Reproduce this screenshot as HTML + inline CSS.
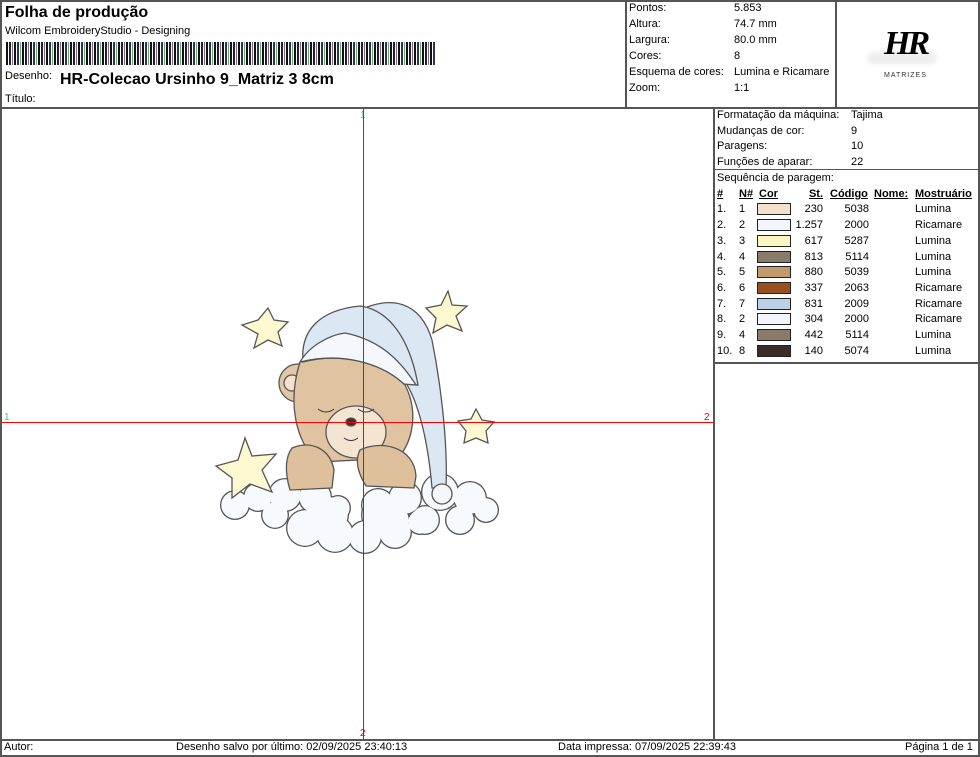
<!DOCTYPE html>
<html><head><meta charset="utf-8"><style>
*{margin:0;padding:0;box-sizing:border-box}
body{width:980px;height:757px;background:#fff;position:relative;overflow:hidden;font-family:"Liberation Sans",Arial,sans-serif;color:#000;font-size:11px}
.a{position:absolute;white-space:nowrap;line-height:13px}
.l{position:absolute;background:#555}
.sw{position:absolute;width:34px;height:12px;border:1px solid #222}
.r{text-align:right}
u{text-decoration:underline}
</style></head><body>
<div class="l" style="left:0;top:0;width:980px;height:2px"></div>
<div class="l" style="left:0;top:0;width:2px;height:757px"></div>
<div class="l" style="left:978px;top:0;width:2px;height:757px"></div>
<div class="l" style="left:0;top:107px;width:980px;height:2px"></div>
<div class="l" style="left:625px;top:0;width:2px;height:108px"></div>
<div class="l" style="left:835px;top:0;width:2px;height:108px"></div>
<div class="l" style="left:713px;top:108px;width:2px;height:632px"></div>
<div class="l" style="left:714px;top:169px;width:265px;height:1px"></div>
<div class="l" style="left:714px;top:362px;width:265px;height:2px"></div>
<div class="l" style="left:0;top:739px;width:980px;height:2px"></div>
<div class="l" style="left:0;top:755px;width:980px;height:2px"></div>

<div class="a" style="left:5px;top:4px;font-size:16px;font-weight:bold;line-height:18px">Folha de produção</div>
<div class="a" style="left:5px;top:25px">Wilcom EmbroideryStudio - Designing</div>
<div style="position:absolute;left:6px;top:42px;width:429px;height:23px;background:
repeating-linear-gradient(90deg,#111 0 2px,transparent 2px 3px,#223 3px 5px,transparent 5px 6px,#7a6a8a 6px 7px,transparent 7px 8px,#111 8px 10px,transparent 10px 11px,#335 11px 13px,transparent 13px 14px,#6a7 14px 15px,transparent 15px 16px)"></div>
<div class="a" style="left:5px;top:70px">Desenho:</div>
<div class="a" style="left:60px;top:71px;font-size:16px;font-weight:bold;line-height:18px">HR-Colecao Ursinho 9_Matriz 3 8cm</div>
<div class="a" style="left:5px;top:93px">Título:</div>

<div class="a" style="left:629px;top:2px">Pontos:</div><div class="a" style="left:734px;top:2px">5.853</div>
<div class="a" style="left:629px;top:18px">Altura:</div><div class="a" style="left:734px;top:18px">74.7 mm</div>
<div class="a" style="left:629px;top:34px">Largura:</div><div class="a" style="left:734px;top:34px">80.0 mm</div>
<div class="a" style="left:629px;top:50px">Cores:</div><div class="a" style="left:734px;top:50px">8</div>
<div class="a" style="left:629px;top:66px">Esquema de cores:</div><div class="a" style="left:734px;top:66px">Lumina e Ricamare</div>
<div class="a" style="left:629px;top:82px">Zoom:</div><div class="a" style="left:734px;top:82px">1:1</div>

<div style="position:absolute;left:867px;top:52px;width:70px;height:12px;border-radius:8px;background:#eee;filter:blur(2px)"></div>
<div class="a" style="left:884px;top:26px;font-family:'Liberation Serif',serif;font-style:italic;font-weight:bold;font-size:34px;line-height:36px;letter-spacing:-3px">HR</div>
<div class="a" style="left:884px;top:72px;font-size:7px;line-height:8px;letter-spacing:1px;color:#333">MATRIZES</div>

<div class="a" style="left:717px;top:109px">Formatação da máquina:</div><div class="a" style="left:851px;top:109px">Tajima</div>
<div class="a" style="left:717px;top:125px">Mudanças de cor:</div><div class="a" style="left:851px;top:125px">9</div>
<div class="a" style="left:717px;top:140px">Paragens:</div><div class="a" style="left:851px;top:140px">10</div>
<div class="a" style="left:717px;top:156px">Funções de aparar:</div><div class="a" style="left:851px;top:156px">22</div>
<div class="a" style="left:717px;top:172px">Sequência de paragem:</div>
<div class="a" style="left:717px;top:188px;font-weight:bold"><u>#</u></div>
<div class="a" style="left:739px;top:188px;font-weight:bold"><u>N#</u></div>
<div class="a" style="left:759px;top:188px;font-weight:bold"><u>Cor</u></div>
<div class="a r" style="left:790px;width:33px;top:188px;font-weight:bold"><u>St.</u></div>
<div class="a" style="left:830px;top:188px;font-weight:bold"><u>Código</u></div>
<div class="a" style="left:874px;top:188px;font-weight:bold"><u>Nome:</u></div>
<div class="a" style="left:915px;top:188px;font-weight:bold"><u>Mostruário</u></div>

<div class="a" style="left:717px;top:203px">1.</div><div class="a" style="left:739px;top:203px">1</div><div class="sw" style="left:757px;top:203px;background:#f2e0cc"></div><div class="a r" style="left:790px;width:33px;top:203px">230</div><div class="a r" style="left:830px;width:39px;top:203px">5038</div><div class="a" style="left:915px;top:203px">Lumina</div>
<div class="a" style="left:717px;top:219px">2.</div><div class="a" style="left:739px;top:219px">2</div><div class="sw" style="left:757px;top:219px;background:#f2f6fc"></div><div class="a r" style="left:790px;width:33px;top:219px">1.257</div><div class="a r" style="left:830px;width:39px;top:219px">2000</div><div class="a" style="left:915px;top:219px">Ricamare</div>
<div class="a" style="left:717px;top:235px">3.</div><div class="a" style="left:739px;top:235px">3</div><div class="sw" style="left:757px;top:235px;background:#fdf6c0"></div><div class="a r" style="left:790px;width:33px;top:235px">617</div><div class="a r" style="left:830px;width:39px;top:235px">5287</div><div class="a" style="left:915px;top:235px">Lumina</div>
<div class="a" style="left:717px;top:251px">4.</div><div class="a" style="left:739px;top:251px">4</div><div class="sw" style="left:757px;top:251px;background:#8a7a6a"></div><div class="a r" style="left:790px;width:33px;top:251px">813</div><div class="a r" style="left:830px;width:39px;top:251px">5114</div><div class="a" style="left:915px;top:251px">Lumina</div>
<div class="a" style="left:717px;top:266px">5.</div><div class="a" style="left:739px;top:266px">5</div><div class="sw" style="left:757px;top:266px;background:#c09a6c"></div><div class="a r" style="left:790px;width:33px;top:266px">880</div><div class="a r" style="left:830px;width:39px;top:266px">5039</div><div class="a" style="left:915px;top:266px">Lumina</div>
<div class="a" style="left:717px;top:282px">6.</div><div class="a" style="left:739px;top:282px">6</div><div class="sw" style="left:757px;top:282px;background:#98501e"></div><div class="a r" style="left:790px;width:33px;top:282px">337</div><div class="a r" style="left:830px;width:39px;top:282px">2063</div><div class="a" style="left:915px;top:282px">Ricamare</div>
<div class="a" style="left:717px;top:298px">7.</div><div class="a" style="left:739px;top:298px">7</div><div class="sw" style="left:757px;top:298px;background:#bcd0e8"></div><div class="a r" style="left:790px;width:33px;top:298px">831</div><div class="a r" style="left:830px;width:39px;top:298px">2009</div><div class="a" style="left:915px;top:298px">Ricamare</div>
<div class="a" style="left:717px;top:313px">8.</div><div class="a" style="left:739px;top:313px">2</div><div class="sw" style="left:757px;top:313px;background:#f2f6fc"></div><div class="a r" style="left:790px;width:33px;top:313px">304</div><div class="a r" style="left:830px;width:39px;top:313px">2000</div><div class="a" style="left:915px;top:313px">Ricamare</div>
<div class="a" style="left:717px;top:329px">9.</div><div class="a" style="left:739px;top:329px">4</div><div class="sw" style="left:757px;top:329px;background:#8a7a6a"></div><div class="a r" style="left:790px;width:33px;top:329px">442</div><div class="a r" style="left:830px;width:39px;top:329px">5114</div><div class="a" style="left:915px;top:329px">Lumina</div>
<div class="a" style="left:717px;top:345px">10.</div><div class="a" style="left:739px;top:345px">8</div><div class="sw" style="left:757px;top:345px;background:#3a2c26"></div><div class="a r" style="left:790px;width:33px;top:345px">140</div><div class="a r" style="left:830px;width:39px;top:345px">5074</div><div class="a" style="left:915px;top:345px">Lumina</div>

<svg style="position:absolute;left:0;top:0" width="713" height="740">
<g fill="#555">
<circle cx="235" cy="505" r="15"/><circle cx="258" cy="497" r="15"/><circle cx="285" cy="495" r="17"/><circle cx="315" cy="497" r="17"/><circle cx="338" cy="508" r="13"/><circle cx="275" cy="515" r="14"/>
<circle cx="305" cy="528" r="19"/><circle cx="335" cy="534" r="19"/><circle cx="365" cy="537" r="17"/><circle cx="395" cy="532" r="17"/><circle cx="420" cy="522" r="13"/><circle cx="330" cy="515" r="19"/><circle cx="380" cy="515" r="19"/>
<circle cx="378" cy="505" r="17"/><circle cx="405" cy="498" r="17"/><circle cx="440" cy="492" r="19"/><circle cx="470" cy="498" r="17"/><circle cx="486" cy="510" r="13"/><circle cx="460" cy="520" r="15"/><circle cx="425" cy="520" r="15"/><circle cx="395" cy="520" r="15"/>
</g>
<g fill="#f6f9fe">
<circle cx="235" cy="505" r="13.7"/><circle cx="258" cy="497" r="13.7"/><circle cx="285" cy="495" r="15.7"/><circle cx="315" cy="497" r="15.7"/><circle cx="338" cy="508" r="11.7"/><circle cx="275" cy="515" r="12.7"/>
<circle cx="305" cy="528" r="17.7"/><circle cx="335" cy="534" r="17.7"/><circle cx="365" cy="537" r="15.7"/><circle cx="395" cy="532" r="15.7"/><circle cx="420" cy="522" r="11.7"/><circle cx="330" cy="515" r="17.7"/><circle cx="380" cy="515" r="17.7"/>
<circle cx="378" cy="505" r="15.7"/><circle cx="405" cy="498" r="15.7"/><circle cx="440" cy="492" r="17.7"/><circle cx="470" cy="498" r="15.7"/><circle cx="486" cy="510" r="11.7"/><circle cx="460" cy="520" r="13.7"/><circle cx="425" cy="520" r="13.7"/><circle cx="395" cy="520" r="13.7"/>
</g>
<g stroke="#555" stroke-width="1.3">
<path d="M268 308 L274 320 L288 322 L278 332 L282 346 L268 340 L254 348 L258 334 L242 325 L258 320 Z" fill="#fdf8d0"/>
<path d="M448 291 L452 305 L467 306 L456 316 L462 331 L447 325 L433 333 L436 318 L426 308 L441 305 Z" fill="#fdf8d0"/>
<path d="M476 409 L482 420 L494 422 L486 431 L488 443 L476 438 L464 443 L466 431 L458 421 L471 419 Z" fill="#fdf8d0"/>
<path d="M245 438 L252 456 L276 454 L262 470 L272 492 L250 484 L232 498 L232 478 L216 466 L238 460 Z" fill="#fdf8d0"/>
<path d="M360 310 C390 296 420 300 432 340 C440 380 448 440 446 488 L432 488 C428 440 418 400 404 380 Z" fill="#dce7f4"/>
<circle cx="298" cy="383" r="19" fill="#e2c7a6"/>
<circle cx="292" cy="383" r="8" fill="#f4e2cf"/>
<path d="M300 362 C330 350 385 358 405 385 C418 410 414 440 398 458 L318 462 C294 440 288 400 300 362 Z" fill="#e0c4a2"/>
<path d="M303 362 C300 330 320 310 360 306 C390 310 410 340 418 385 L404 384 C380 362 340 352 303 362 Z" fill="#dce7f4"/>
<path d="M300 362 C310 345 330 335 345 333 C380 340 400 360 416 385 L404 384 C380 362 340 352 300 362 Z" fill="#f4f7fc"/>
<ellipse cx="356" cy="432" rx="30" ry="26" fill="#f4e4d2"/>
<ellipse cx="351" cy="422" rx="5" ry="4" fill="#333"/>
<path d="M292 448 C310 440 330 448 334 470 L332 488 L290 490 C284 470 286 456 292 448 Z" fill="#dfc09c"/>
<path d="M360 450 C380 440 414 446 416 476 L414 488 L366 486 C356 470 356 458 360 450 Z" fill="#dfc09c"/>
<circle cx="442" cy="494" r="10" fill="#f4f7fc"/>
</g>
<path d="M318 409 q8 6 16 0 M358 409 q8 6 16 0" stroke="#333" fill="none"/>
<path d="M344 438 q7 5 14 0" stroke="#333" fill="none"/>
<text x="360" y="118" font-family="Liberation Sans" font-size="10" fill="#3c9">1</text>
<text x="4" y="420" font-family="Liberation Sans" font-size="10" fill="#3c9">1</text>
<text x="704" y="420" font-family="Liberation Sans" font-size="10" fill="#e00">2</text>
<text x="360" y="736" font-family="Liberation Sans" font-size="10" fill="#e00">2</text>
</svg>
<div style="position:absolute;left:363px;top:109px;width:1px;height:631px;background:#f00"></div>
<div style="position:absolute;left:2px;top:422px;width:711px;height:1px;background:#f00"></div>

<div class="a" style="left:4px;top:741px">Autor:</div>
<div class="a" style="left:176px;top:741px">Desenho salvo por último: 02/09/2025 23:40:13</div>
<div class="a" style="left:558px;top:741px">Data impressa: 07/09/2025 22:39:43</div>
<div class="a" style="left:905px;top:741px">Página 1 de 1</div>
</body></html>
